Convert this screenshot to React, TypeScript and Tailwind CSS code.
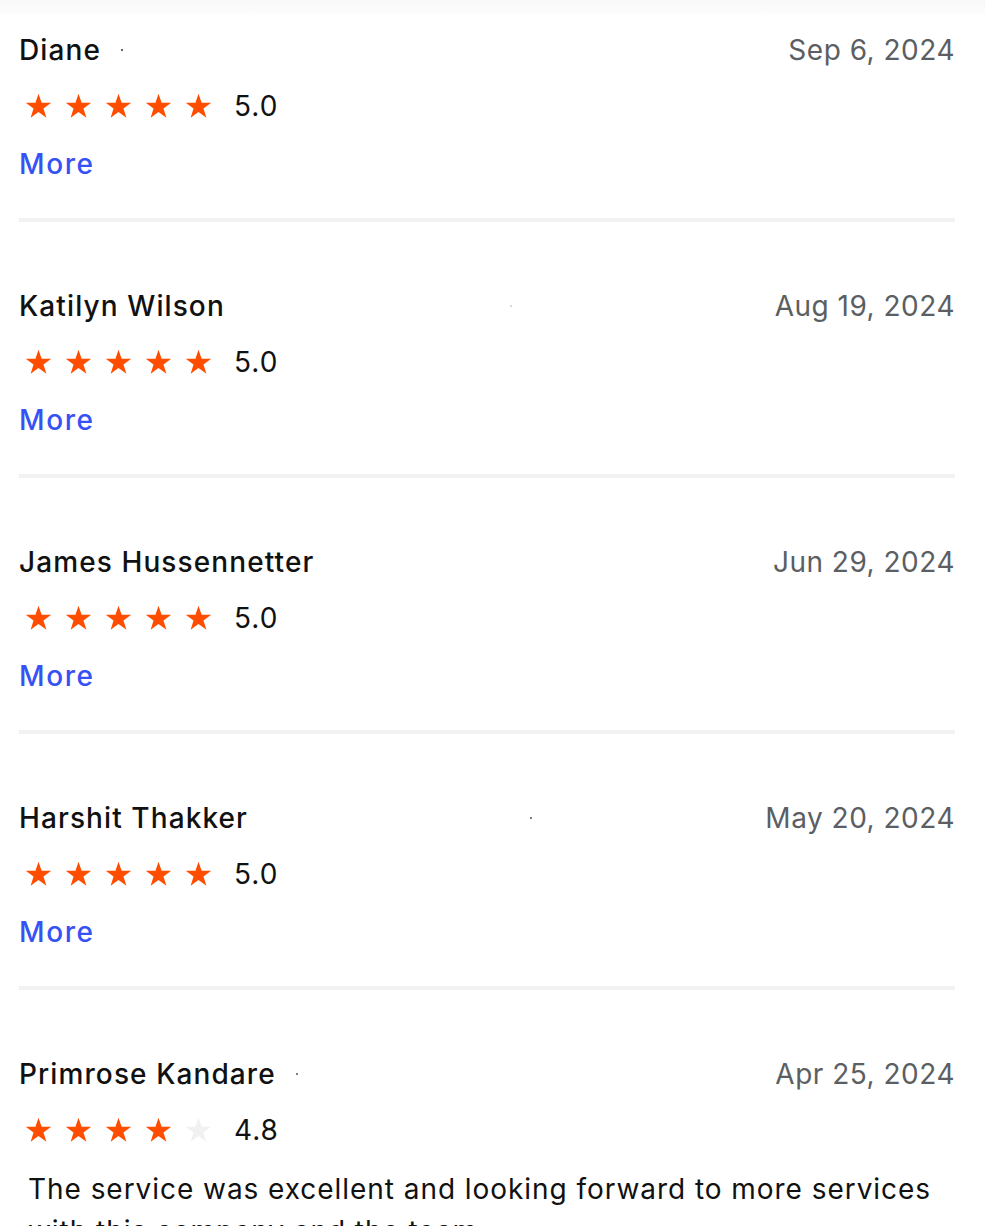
import { Fragment } from 'react'

type Review = { id: number; name: string; date: string; rating: number; stars: number; text?: string; dot: string }

const reviews: Review[] = [
  { id: 1, name: 'Diane', date: 'Sep 6, 2024', rating: 5.0, stars: 5, dot: 'ml-[20px] bg-[#333]' },
  { id: 2, name: 'Katilyn Wilson', date: 'Aug 19, 2024', rating: 5.0, stars: 5, dot: 'ml-[285px] bg-[#ccc]' },
  { id: 3, name: 'James Hussennetter', date: 'Jun 29, 2024', rating: 5.0, stars: 5, dot: 'hidden' },
  { id: 4, name: 'Harshit Thakker', date: 'May 20, 2024', rating: 5.0, stars: 5, dot: 'ml-[282px] bg-[#555]' },
  {
    id: 5,
    name: 'Primrose Kandare',
    date: 'Apr 25, 2024',
    rating: 4.8,
    stars: 4,
    dot: 'ml-[20px] bg-[#555]',
    text: 'The service was excellent and looking forward to more services with this company and the team.',
  },
]

function Star({ filled }: { filled: boolean }) {
  return (
    <svg width="27" height="26" viewBox="0 0 24 23" className={filled ? 'text-[#ff4d00]' : 'text-[#f1f1f1]'}>
      <path fill="currentColor" d="M12 0.6l2.75 8.1h8.55l-6.9 5.05 2.63 8.15L12 16.9l-7.03 5 2.63-8.15L0.7 8.7h8.55z" />
    </svg>
  )
}

export default function App() {
  return (
    <div className="w-[985px] h-[1226px] overflow-hidden bg-white font-['Inter','Liberation_Sans',sans-serif]">
      <div className="h-[14px] bg-gradient-to-b from-[#f8f8f8] to-[#fdfdfd]" />
      <div className="pl-[19px] pr-[30px] pt-4">
        {reviews.map((r, i) => (
          <Fragment key={r.id}>
            {i > 0 && <div className="h-[4px] bg-[#f2f2f2] mt-[34px] mb-16" />}
            <div>
              <div className="flex items-center justify-between h-10">
                <div className="flex items-center">
                  <span className="text-[28px] font-medium text-[#111] tracking-[1.1px]">{r.name}</span>
                  <span className={`w-[2px] h-[2px] rounded-full ${r.dot}`} />
                </div>
                <span className="text-[28px] text-[#5b5e62] tracking-[0.5px]">{r.date}</span>
              </div>
              <div className="flex items-center h-10 mt-4">
                <div className="flex items-center gap-[13px] pl-[6px]">
                  {[0, 1, 2, 3, 4].map((s) => (
                    <Star key={s} filled={s < r.stars} />
                  ))}
                </div>
                <span className="ml-[22px] text-[28px] text-[#111] tracking-[1px]">{r.rating.toFixed(1)}</span>
              </div>
              {r.text ? (
                <p className="mt-[18px] pl-[9px] text-[28px] leading-[42px] text-[#111] tracking-[0.95px]">{r.text}</p>
              ) : (
                <div className="mt-[18px] h-10 flex items-center">
                  <button className="text-[28px] text-[#3651f5] font-medium tracking-[1.6px]">More</button>
                </div>
              )}
            </div>
          </Fragment>
        ))}
      </div>
    </div>
  )
}
